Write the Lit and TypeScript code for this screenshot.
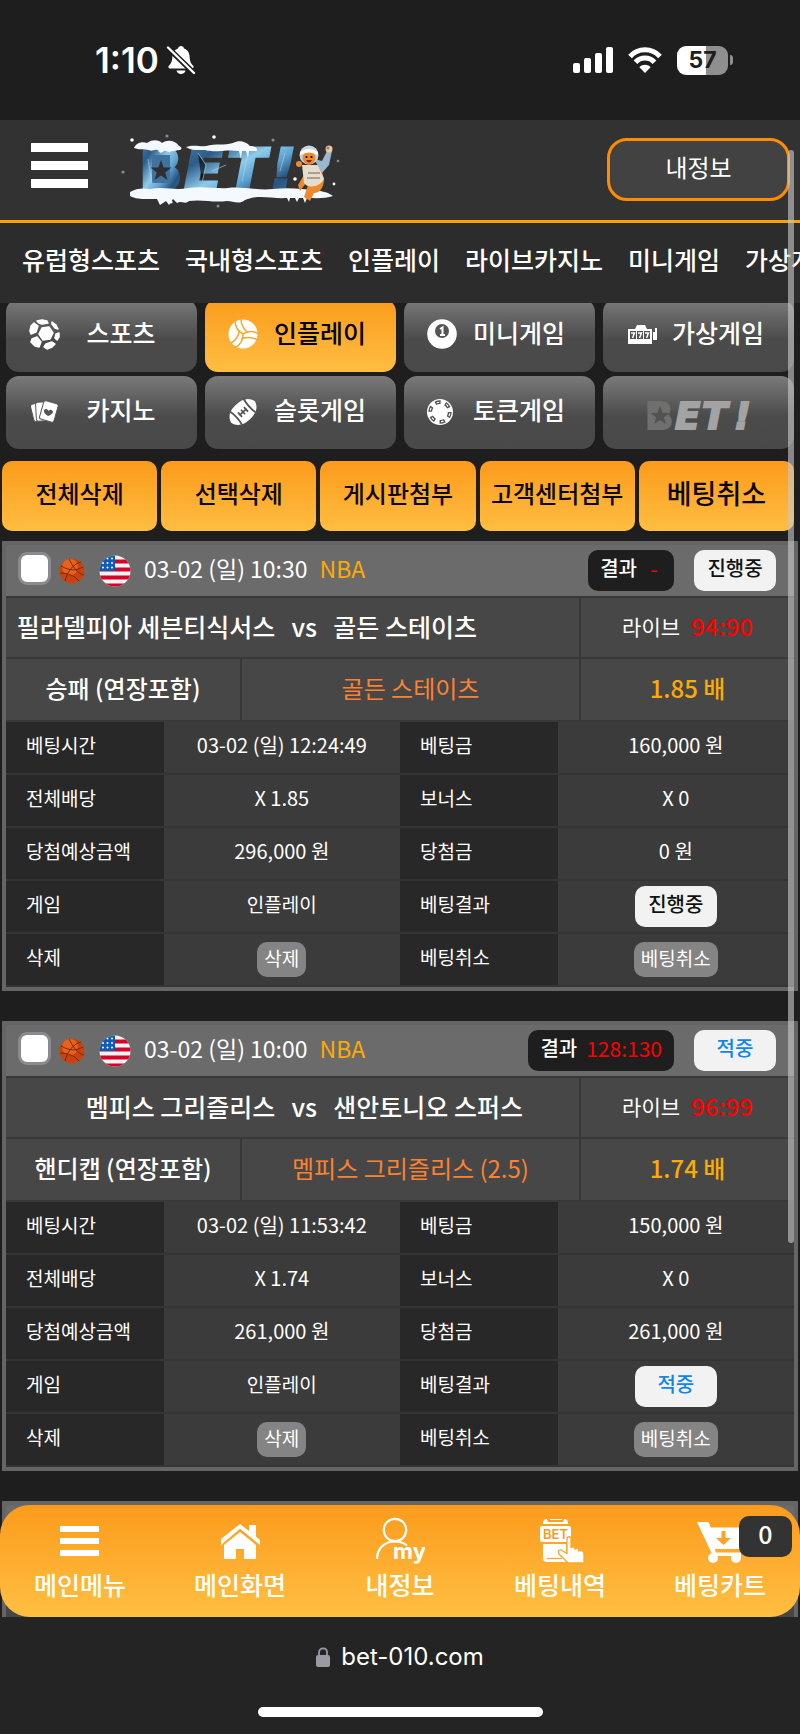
import { LitElement, html, svg, css, nothing } from "lit";
import { customElement, property } from "lit/decorators.js";

type Bet = {
  id: string;
  date: string;
  league: string;
  result: string;
  status: string;
  won: boolean;
  home: string;
  away: string;
  live: string;
  market: string;
  pick: string;
  odds: string;
  time: string;
  stake: string;
  total: string;
  bonus: string;
  expected: string;
  paid: string;
};

const BETS: Bet[] = [
  {
    id: "b1", date: "03-02 (일) 10:30", league: "NBA", result: "-", status: "진행중", won: false,
    home: "필라델피아 세븐티식서스", away: "골든 스테이츠", live: "94:90",
    market: "승패 (연장포함)", pick: "골든 스테이츠", odds: "1.85 배",
    time: "03-02 (일) 12:24:49", stake: "160,000 원", total: "X 1.85", bonus: "X 0",
    expected: "296,000 원", paid: "0 원",
  },
  {
    id: "b2", date: "03-02 (일) 10:00", league: "NBA", result: "128:130", status: "적중", won: true,
    home: "멤피스 그리즐리스", away: "샌안토니오 스퍼스", live: "96:99",
    market: "핸디캡 (연장포함)", pick: "멤피스 그리즐리스 (2.5)", odds: "1.74 배",
    time: "03-02 (일) 11:53:42", stake: "150,000 원", total: "X 1.74", bonus: "X 0",
    expected: "261,000 원", paid: "261,000 원",
  },
];

const STAR = "M0-10 2.4-3.2 9.5-3.1 3.8 1.3 5.9 8.1 0 4-5.9 8.1-3.8 1.3-9.5-3.1-2.4-3.2Z";

const bell = html`<svg width="30" height="30" viewBox="0 0 30 30" aria-hidden="true">
  <path fill="#fff" d="M15 1c1.600 0 2.800 1 3 2.400 3.700 1.200 5.400 4.200 5.600 8.200.2 5 1.400 7 3.600 9.200.9 1 .3 2.700-1.200 2.700H4c-1.500 0-2.100-1.700-1.200-2.700C5 18.600 6.200 16.600 6.400 11.600 6.600 7.600 8.300 4.600 12 3.400 12.200 2 13.400 1 15 1Zm-4.500 24.500h9c-.4 2.300-2.200 3.500-4.500 3.500s-4.100-1.200-4.500-3.500Z"/>
  <path stroke="#1e1e1e" stroke-width="5.500" d="M1 2 29 29"/>
  <path stroke="#fff" stroke-width="2.400" stroke-linecap="round" d="M2 2.500 28 28"/>
</svg>`;

const signal = html`<svg width="40" height="26" viewBox="0 0 40 26" fill="#fff" aria-hidden="true">
  <rect x="0" y="16" width="7" height="10" rx="2"/><rect x="11" y="11" width="7" height="15" rx="2"/>
  <rect x="22" y="6" width="7" height="20" rx="2"/><rect x="33" y="0" width="7" height="26" rx="2"/>
</svg>`;

const wifi = html`<svg width="34" height="26" viewBox="0 0 34 26" fill="none" stroke="#fff" stroke-width="5" aria-hidden="true">
  <path d="M2 9.500C10 .6 24 .6 32 9.500"/><path d="M7.500 15.300c5.200-5.600 13.800-5.600 19 0"/>
  <path fill="#fff" stroke="none" d="M17 26l-5.600-5.800c3-3.200 8.200-3.200 11.200 0Z"/>
</svg>`;

const lock = html`<svg width="14" height="20" viewBox="0 0 14 20" aria-hidden="true">
  <rect y="8" width="14" height="12" rx="2" fill="#9b99a1"/>
  <path d="M3 9V5.500C3 3 4.600 1.400 7 1.400S11 3 11 5.500V9" fill="none" stroke="#9b99a1" stroke-width="1.800"/>
</svg>`;

const swirl = "M0 0Q-8-4-8-14M5-1Q-2-7-2-15";

const TILE_ICONS: Record<string, unknown> = {
  soccer: svg`<g transform="translate(16 16)" fill="#fff" stroke="#fff" stroke-width="1.500" stroke-linejoin="round">
    <path d="M-2-6 5-7 9-1 6 5-1 6-5 0ZM-13-8-10-11-6-8-8-2-13 0-14-3ZM-12 5-7 3-3 8-5 13-9 12-13 8ZM2 10 8 8 11 10 8 13 3 15 0 13ZM-7-13-2-14 3-13 4-11-2-10-5-11ZM8-12 12-9 14-5 11-6 8-10ZM12 0 15-1 15 3 13 6 11 4Z"/></g>`,
  volley: svg`<g transform="translate(16 16)"><circle r="14.500" fill="#fff"/>
    <g fill="none" stroke="#fda628" stroke-width="1.500"><path d="${swirl}"/><path transform="rotate(120)" d="${swirl}"/><path transform="rotate(240)" d="${swirl}"/></g></g>`,
  ball: svg`<g transform="translate(16 16)"><circle r="14.800" fill="#fff"/><circle cy="-3" r="7" fill="#555"/>
    <path d="M-2-5 0.500-6.500V1M-2 1H3" stroke="#fff" stroke-width="2" fill="none"/></g>`,
  slot: svg`<path fill="#fff" d="M3 11h7l2-4h8l2 4h5v15H3Zm25 3h2v-4h2v12h-4Z"/>
    <g fill="#555"><rect x="5" y="13" width="6" height="8"/><rect x="12" y="13" width="6" height="8"/><rect x="19" y="13" width="6" height="8"/></g>
    <g fill="none" stroke="#fff" stroke-width="1.500"><path d="M6 15h3.500l-2 5M13 15h3.500l-2 5M20 15h3.500l-2 5"/></g>`,
  cards: svg`<g fill="#fff" stroke="#555" stroke-width="1"><rect x="4" y="8" width="12" height="18" rx="2" transform="rotate(-14 10 17)"/>
    <rect x="8" y="7" width="12" height="19" rx="2" transform="rotate(-3 14 17)"/><rect x="13.500" y="7" width="15" height="19" rx="2" transform="rotate(16 21 16)"/></g>
    <path fill="#555" d="M20 21c-5-3-5-7-2-7 1.500 0 2.200 1 2.500 2 1-1 2-1.600 3.400-.8 2.600 1.500.1 4.500-3.900 5.800Z"/>`,
  rugby: svg`<g transform="translate(16 17) rotate(-42)"><path fill="#fff" d="M-16 0C-14-8-7-10 0-10S14-8 16 0C14 8 7 10 0 10S-14 8-16 0Z"/>
    <path fill="none" stroke="#555" stroke-width="1.800" d="M-9.500-10Q-7 0-9.500 10M9.500-10Q7 0 9.500 10"/>
    <path stroke="#555" stroke-width="1.800" d="M-5 0H5M-4-3V3M0-3V3M4-3V3"/></g>`,
  chip: svg`<g transform="translate(14 17)"><circle r="13" fill="#fff"/><circle r="9.800" fill="none" stroke="#555" stroke-width="3.800" stroke-dasharray="5.500 4.760"/>
    <circle r="9.800" fill="none" stroke="#fff" stroke-width="1.200" stroke-dasharray="2.500 7.760" stroke-dashoffset="-1.500"/></g>`,
};

const TILES = [
  ["soccer", "스포츠"], ["volley", "인플레이"], ["ball", "미니게임"], ["slot", "가상게임"],
  ["cards", "카지노"], ["rugby", "슬롯게임"], ["chip", "토큰게임"], ["logo", ""],
];

const NAV_ICONS: Record<string, unknown> = {
  menu: svg`<path fill="#fff" d="M5 9h39v6H5ZM5 21h39v6H5ZM5 33h39v6H5Z"/>`,
  home: svg`<path fill="#fff" d="M6 22 25 7l9 7V8h7v11.500l4 3.500v5L25 11.800 6 28Z"/><path fill="#fff" d="M25 15 41 28v14H29V32h-8v10H9V28Z"/>`,
  my: svg`<g fill="none" stroke="#fff" stroke-width="2.200"><circle cx="20" cy="13" r="11.200"/><path d="M2 42C2 31 10 24.500 20 24.500c5 0 9 1.500 12 4"/></g>
    <text x="18" y="42" class="my">my</text>`,
  slip: svg`<path fill="#fff" d="M8 6q0-4 4-4l1 3h15l1-3q4 0 4 4v1H8Zm7-4h12v1H15ZM7 9h27q2 0 2 2v12q0 2-2 2H7q-2 0-2-2V11q0-2 2-2ZM8 27h23v18H12q-4 0-4-4Z"/>
    <text x="8" y="22" class="bet">BET</text>
    <path fill="#fff" stroke="#fda62b" stroke-width="1.300" d="M33 46 24 37c-2-3 1-5 3-3.500l5 3V22c0-3 4-3 4 0v9c1-2 4-1 4 1 2-2 4 0 4 2 2-1 5 0 5 3v9Z"/>
    <path d="M12 41.500h15" stroke="#fda62b" stroke-width="1.300"/>`,
  cart: svg`<path fill="#fff" d="M2 5h10q2 0 2.500 2l1 3.500H52L47 32H20l.5 3.500H46V39H18Z"/><path fill="none" stroke="#fff" stroke-width="3" d="M14 10 19.500 38"/>
    <circle cx="18" cy="41" r="5" fill="#fff"/><circle cx="41" cy="41" r="5" fill="#fff"/>
    <path fill="#fda225" d="M26.500 14h4v7h5.500l-7.500 7-7.500-7h5.500Z"/>`,
};

const snowLogo = html`<svg class="logo" width="220" height="78" viewBox="0 0 220 78" role="img" aria-label="BET!">
  <defs>
    <linearGradient id="ice" x1="0" y1="0" x2="1" y2="1">
      <stop offset="0" stop-color="#4f7ea6"/><stop offset=".25" stop-color="#2d5c8a"/><stop offset=".45" stop-color="#8ecbea"/>
      <stop offset=".6" stop-color="#5fa3d0"/><stop offset=".75" stop-color="#28537f"/><stop offset="1" stop-color="#4a7db0"/>
    </linearGradient>
  </defs>
  <text x="19" y="59" class="ice upright">B</text>
  <text x="64 107 150" y="59" class="ice">ET!</text>
  <rect x="32" y="24" width="18" height="28" fill="#41719c"/>
  <path fill="#2d2f33" transform="translate(41 40) scale(1.1)" d="${STAR}"/>
  <g stroke="#a9d6ee" stroke-width="1" opacity=".6"><path d="M28 28l4 24M78 22l8 12-4 18M92 40l14-6M128 24l-6 26M165 22l-5 18"/></g>
  <path fill="#f4f9ff" d="M14 17c2-5 8-7 13-5 6-4 12-3 15 0 6-4 14-2 17 3 3 1 3 3 1 4-5 0-6 2-9 1-2 3-4-1-7 0-3 3-5 2-6-1-4-1-6 2-9 0-5-1-10 0-15-2ZM66 16c8-3 14 0 20-1 10-3 18 0 27-3 8-4 14 0 17 3 5 0 8 2 7 5h-8l-1 7-2-7h-4l-1 8-2-8c-12-2-26 2-34-1-7 0-14 1-19-3Z"/>
  <path fill="#f4f9ff" d="M10 61c6-4 14-4 20-3 14-3 26 2 38-1 16-2 30 1 40 0 14-2 30 3 45 1 16-2 30 0 40 1 8 1 15 2 20 6-8 3-18 2-26 2l-2 5-2-5h-4l-2 4-2-4h-5l-1 4-2-4c-16 1-28-4-42 2-6 5-12 1-18 1-14 2-24-2-38 0-4 4-8-1-12 2l-4-4-4 6-3-4-6 4-3-6c-9 0-20 1-27-3Z"/>
  <g><path fill="#ea8a2c" d="M184 44 178 54l2 6 6-8 2 2-4 12 6 4 4-8c6 0 10-6 10-14l-4-14Z"/>
    <path fill="#e6dccb" d="M182 34h16l6 14c-4 8-16 10-20 4Z"/><path fill="#9bb7cf" d="M194 28l8 2 6-12 4 2-3 14-7 8Z"/>
    <circle cx="189" cy="24" r="9.500" fill="#c9d6df"/><circle cx="189" cy="27" r="6.500" fill="#ef8b2e"/><path fill="#fff" d="M180 21q9-6 18 0v3q-9-5-18 0Z"/>
    <circle cx="186.500" cy="26" r="1.100"/><circle cx="191.500" cy="26" r="1.100"/><path fill="#8c1c14" d="M186 29h6q-3 5-6 0Z"/>
    <circle cx="209" cy="18" r="3.500" fill="#f2c79a"/><circle cx="179" cy="33" r="3" fill="#ef8b2e"/>
    <path d="M188 42h12M187 47h13" stroke="#6c6258" stroke-width="1"/></g>
  <g fill="#fff"><circle cx="12" cy="9" r="1.800"/><circle cx="94" cy="6" r="1.800"/><circle cx="51" cy="71" r="1.600"/><circle cx="175" cy="48" r="1.800"/><circle cx="214" cy="53" r="1.400"/></g>
  <g fill="#8a8a8a"><circle cx="47" cy="5" r="1.600"/><circle cx="3" cy="41" r="1.600"/><circle cx="153" cy="9" r="1.600"/><circle cx="208" cy="17" r="1.600"/><circle cx="218" cy="30" r="1.300"/><circle cx="98" cy="75" r="1.500"/></g>
</svg>`;

const greyLogo = html`<svg class="grey-logo" width="120" height="50" viewBox="0 0 120 50" role="img" aria-label="BET!">
  <text x="4" y="40" class="plain dim">B</text><text x="34 61 93" y="40" class="plain">ET!</text>
  <rect x="11" y="17" width="14" height="18" fill="#6f6f6f"/>
  <path fill="#525252" transform="translate(19 27)" d="${STAR}"/>
</svg>`;

const basketball = html`<svg width="26" height="26" viewBox="0 0 26 26" aria-hidden="true">
  <circle cx="13" cy="13" r="12.500" fill="#c9430f"/><circle cx="11" cy="9" r="8" fill="#f2691c" opacity=".8"/>
  <g fill="none" stroke="#6e240c" stroke-width=".9"><path d="M2 8c9 5 15 5 22 1M6 23C8 14 14 6 22 4M1 15c8 0 15 3 19 8M10 1c4 8 9 15 15 16"/></g>
</svg>`;

const flag = (id: string) => html`<svg width="32" height="32" viewBox="0 0 32 32" role="img" aria-label="USA">
  <clipPath id="f${id}"><circle cx="16" cy="16" r="15.500"/></clipPath>
  <g clip-path="url(#f${id})"><rect width="32" height="32" fill="#f3f3f3"/>
    <path stroke="#d80027" stroke-width="4" d="M0 6.500h32M0 14.500h32M0 22.500h32M0 30.500h32"/><rect width="16" height="16" fill="#0f5bb5"/>
    <g fill="#fff"><circle cx="4" cy="8" r="1"/><circle cx="8.500" cy="8" r="1"/><circle cx="13" cy="8" r="1"/><circle cx="4" cy="12.500" r="1"/><circle cx="8.500" cy="12.500" r="1"/><circle cx="13" cy="12.500" r="1"/><circle cx="8.500" cy="3.500" r="1"/><circle cx="13" cy="3.500" r="1"/></g></g>
</svg>`;

const base = css`
  * { box-sizing: border-box; }
  button { font: inherit; color: inherit; border: 0; padding: 0; margin: 0; background: none; cursor: pointer; }
  a { color: inherit; text-decoration: none; }
  svg { display: block; flex: none; }
`;

@customElement("bet-card")
class BetCard extends LitElement {
  @property({ attribute: false }) bet?: Bet;

  static styles = [base, css`
    :host { display: block; border: 4px solid #656565; background: #383838; color: #fff; line-height: 30px; }
    .head { display: flex; align-items: center; height: 51px; padding: 0 18px 0 12px; background: #6b6b6b; margin-bottom: 2px; }
    .pick { appearance: none; width: 33px; height: 33px; margin: 0 8px 4px 0; border: 3px solid #8a8a90; border-radius: 9px; background: #fff; }
    .flag { margin: 0 13px 0 14px; }
    .date { font-size: 23px; margin-bottom: 6px; }
    .league { font-size: 23px; color: #fbaa06; margin: 0 auto 6px 12px; }
    .result, .status { display: flex; align-items: center; height: 41px; border-radius: 10px; font-size: 20px; padding-bottom: 6px; }
    .result { background: #1e1e1e; padding-left: 12px; padding-right: 12px; gap: 9px; font-weight: 500; margin-right: 20px; }
    .red { color: #f00; }
    .result .red { min-width: 16px; text-align: center; font-size: 21px; font-weight: 400; }
    .status { min-width: 82px; justify-content: center; background: #f2f2f2; color: #111; font-weight: 500; }
    .won { color: #0f86ea; }
    .row { display: flex; gap: 2px; margin-bottom: 2px; }
    .cell { display: flex; align-items: center; justify-content: center; background: #474747; white-space: nowrap; height: 59px; padding-bottom: 4px; }
    .match { flex: 1; display: grid; grid-template-columns: 47% 58px 1fr; font-size: 25px; font-weight: 500; text-align: center; }
    .home { text-align: right; }
    .away { text-align: left; }
    .side { width: 213px; }
    .live { font-size: 21px; gap: 11px; }
    .live .red { font-size: 24px; font-weight: 500; }
    .bets .cell { height: 61px; font-size: 24px; }
    .market { width: 234px; font-weight: 500; }
    .choice { flex: 1; color: #fd8230; }
    .odds { color: #fbaa06; font-weight: 500; }
    table { width: 100%; border-collapse: separate; border-spacing: 0; table-layout: fixed; font-size: 20px; }
    th, td { height: 53px; padding: 0 0 5px; border-bottom: 2px solid #343434; font-weight: 400; }
    th { width: 20%; background: #282828; text-align: left; padding-left: 20px; font-size: 19px; }
    td { width: 30%; background: #3b3b3b; text-align: center; }
    .control { padding: 0; line-height: 0; }
    .control .status { display: inline-flex; vertical-align: middle; line-height: 30px; }
    .word { font-size: 19px; }
    .small { height: 35px; border-radius: 10px; background: #848484; padding: 0 7px 4px; font-size: 19px; line-height: 30px; vertical-align: middle; }
  `];

  render() {
    const b = this.bet;
    if (!b) return html`<div class="head"></div><div class="row"><div class="cell match"></div><div class="cell side"></div></div>`;
    const status = html`<span class="status ${b.won ? "won" : ""}">${b.status}</span>`;
    return html`
      <div class="head">
        <input class="pick" type="checkbox" id=${b.id} aria-labelledby="d${b.id}">
        ${basketball}<span class="flag">${flag(b.id)}</span>
        <label class="date" id="d${b.id}" for=${b.id}>${b.date}</label><span class="league">${b.league}</span>
        <span class="result">결과 <span class="red">${b.result}</span></span>${status}
      </div>
      <div class="row">
        <div class="cell match"><span class="home">${b.home}</span><span>vs</span><span class="away">${b.away}</span></div>
        <div class="cell side live"><span>라이브</span><span class="red">${b.live}</span></div>
      </div>
      <div class="row bets">
        <div class="cell market">${b.market}</div><div class="cell choice">${b.pick}</div><div class="cell side odds">${b.odds}</div>
      </div>
      <table>
        <tr><th scope="row">베팅시간</th><td>${b.time}</td><th scope="row">베팅금</th><td>${b.stake}</td></tr>
        <tr><th scope="row">전체배당</th><td>${b.total}</td><th scope="row">보너스</th><td>${b.bonus}</td></tr>
        <tr><th scope="row">당첨예상금액</th><td>${b.expected}</td><th scope="row">당첨금</th><td>${b.paid}</td></tr>
        <tr><th scope="row">게임</th><td class="word">인플레이</td><th scope="row">베팅결과</th><td class="control">${status}</td></tr>
        <tr><th scope="row">삭제</th><td class="control"><button class="small">삭제</button></td><th scope="row">베팅취소</th><td class="control"><button class="small">베팅취소</button></td></tr>
      </table>`;
  }
}

@customElement("app-root")
class AppRoot extends LitElement {
  static styles = [base, css`
    :host { display: block; position: relative; min-height: 100vh; overflow: hidden; background: #1e1e1e; color: #fff;
      font-family: "Noto Sans CJK KR", "Noto Sans", sans-serif; line-height: 32px; }
    .phone { display: flex; align-items: center; height: 120px; padding: 0 67px 0 95px; font-family: Inter, sans-serif; }
    .clock { font-size: 35px; font-weight: 600; margin-right: 7px; }
    .signals { display: flex; align-items: center; gap: 15px; margin-left: auto; }
    .cell { display: flex; align-items: center; gap: 2px; }
    .level { width: 51px; height: 29px; border-radius: 9px; background: linear-gradient(90deg, #fff 57%, #8f8f8f 57%); color: #1e1e1e;
      font-size: 23px; font-weight: 700; line-height: 29px; text-align: center; }
    .cap { width: 3px; height: 10px; border-radius: 0 3px 3px 0; background: #8f8f8f; }
    header { display: flex; align-items: center; height: 103px; padding: 0 10px 2px 31px; background: #323232; border-bottom: 3px solid #fca005; }
    .burger { display: grid; gap: 9px; width: 57px; margin-bottom: 8px; }
    .burger i { height: 9px; background: #fff; }
    .logo { margin: 2px auto 0 32px; }
    .ice { font: italic 700 57px "DejaVu Sans", sans-serif; fill: url(#ice); stroke: url(#ice); stroke-width: 3; }
    .ice.upright { font-style: normal; }
    .mine { width: 183px; height: 63px; padding-bottom: 4px; border: 3px solid #ff8c00; border-radius: 20px; background: #424242; font-size: 24px; }
    .menu { display: flex; gap: 25px; height: 80px; align-items: center; padding: 0 0 8px 22px; overflow: hidden; white-space: nowrap;
      background: #2c2c2c; font-size: 25px; font-weight: 500; }
    .clip { overflow: hidden; }
    .tiles { display: grid; grid-template-columns: repeat(4, 1fr); gap: 4px 8px; margin: -4px 6px 12px; }
    .tile { display: flex; align-items: center; height: 73px; padding: 0 0 2px 22px; border-radius: 13px;
      background: linear-gradient(#7a7a7a, #4b4b4b 55%, #494949); font-size: 25px; font-weight: 500; }
    .tile span { flex: 1; text-align: center; padding: 0 16px 6px 0; }
    .active { background: linear-gradient(#fb9b1c, #ffbe41); color: #000; }
    .grey-logo { margin: 4px auto 0 16px; }
    .plain { font: italic 700 37px "DejaVu Sans", sans-serif; fill: #a3a3a3; stroke: #a3a3a3; stroke-width: 2; }
    .dim { fill: #6f6f6f; stroke: #6f6f6f; font-style: normal; }
    .actions { display: grid; grid-template-columns: repeat(5, 1fr); gap: 4px; padding: 0 6px 0 2px; }
    .actions button { height: 70px; padding-bottom: 6px; border-radius: 10px; background: linear-gradient(#fb9b1c, #ffbe41); color: #0c0800;
      font-size: 24px; font-weight: 500; white-space: nowrap; }
    .actions .strong { font-size: 27px; }
    .list { display: grid; gap: 30px; margin: 10px 2px 0; }
    .peek { height: 116px; overflow: hidden; }
    .dock { position: relative; display: grid; grid-template-columns: repeat(5, 1fr); height: 112px; margin-top: -112px;
      border-radius: 30px; background: linear-gradient(#fb9b1c, #ffbf42); font-size: 25px; font-weight: 500; }
    .dock a { display: flex; flex-direction: column; align-items: center; gap: 5px; padding-top: 12px; line-height: 28px; }
    .my { font: 700 22px Inter, sans-serif; fill: #fff; }
    .bet { font: 600 13px Inter, sans-serif; fill: #f99b1f; }
    .count { position: absolute; right: 8px; top: 11px; width: 53px; height: 41px; border-radius: 10px; background: #333; text-align: center; line-height: 34px; }
    .address { display: grid; justify-items: center; height: 117px; padding-top: 24px; background: #242424; align-content: start; gap: 34px; }
    .url { display: flex; align-items: center; gap: 11px; font: 24px/32px Inter, sans-serif; }
    .home { width: 285px; height: 10px; border-radius: 5px; background: #fff; }
    .thumb { position: absolute; right: 6px; top: 150px; width: 6px; height: 1093px; border-radius: 3px; background: rgba(200, 200, 200, .62); }
  `];

  render() {
    const menu = ["유럽형스포츠", "국내형스포츠", "인플레이", "라이브카지노", "미니게임", "가상게임"];
    const actions = ["전체삭제", "선택삭제", "게시판첨부", "고객센터첨부", "베팅취소"];
    const dock = [["menu", "메인메뉴"], ["home", "메인화면"], ["my", "내정보"], ["slip", "베팅내역"], ["cart", "베팅카트"]];
    return html`
      <div class="phone"><span class="clock">1:10</span>${bell}
        <div class="signals">${signal}${wifi}<div class="cell"><div class="level">57</div><i class="cap"></i></div></div>
      </div>
      <header>
        <button class="burger" aria-label="메뉴"><i></i><i></i><i></i></button>
        ${snowLogo}
        <button class="mine">내정보</button>
      </header>
      <nav class="menu">${menu.map((m) => html`<a href="#">${m}</a>`)}</nav>
      <div class="clip"><div class="tiles">
        ${TILES.map(([icon, name], i) => html`<a href="#" class="tile ${i === 1 ? "active" : ""}">
          ${icon === "logo" ? greyLogo : html`<svg width="33" height="33" viewBox="0 0 33 33" aria-hidden="true">${TILE_ICONS[icon]}</svg><span>${name}</span>`}
        </a>`)}
      </div></div>
      <div class="actions">${actions.map((a, i) => html`<button class=${i === 4 ? "strong" : nothing}>${a}</button>`)}</div>
      <main class="list">
        ${BETS.map((b) => html`<bet-card .bet=${b}></bet-card>`)}
        <div class="peek"><bet-card></bet-card></div>
      </main>
      <nav class="dock">
        ${dock.map(([icon, name]) => html`<a href="#"><svg width="50" height="48" viewBox="0 0 50 48" aria-hidden="true">${NAV_ICONS[icon]}</svg><span>${name}</span></a>`)}
        <span class="count">0</span>
      </nav>
      <footer class="address"><div class="url">${lock}<span>bet-010.com</span></div><div class="home"></div></footer>
      <div class="thumb"></div>`;
  }
}
